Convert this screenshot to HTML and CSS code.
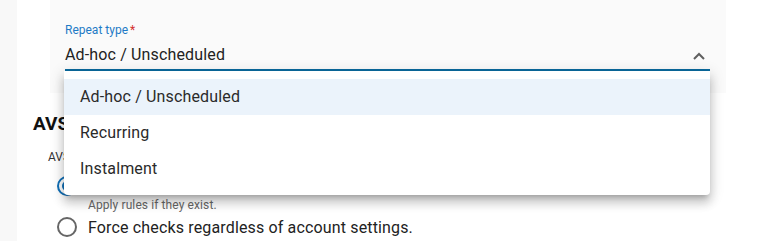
FILE: index.html
```html
<!DOCTYPE html>
<html>
<head>
<meta charset="utf-8">
<link rel="stylesheet" href="styles.css">
</head>
<body>
<div class="page">
  <div class="side"></div>
  <div class="main">
    <div class="field-box">
      <div class="field">
        <div class="label">Repeat type<span class="req">*</span></div>
        <div class="value-row">
          <span class="value">Ad-hoc / Unscheduled</span>
          <svg class="chev" width="14" height="10" viewBox="0 0 14 10"><path d="M2 8 L7 3 L12 8" fill="none" stroke="#5f5f5f" stroke-width="2"/></svg>
        </div>
        <div class="menu">
          <div class="item active">Ad-hoc / Unscheduled</div>
          <div class="item">Recurring</div>
          <div class="item">Instalment</div>
        </div>
      </div>
    </div>
    <div class="section">
      <h2 class="heading">AVS</h2>
      <div class="sub">AVS check</div>
      <div class="radios">
        <div class="radio-row">
          <span class="radio checked"></span>
          <span class="rtext">Use account settings.</span>
        </div>
        <div class="hint">Apply rules if they exist.</div>
        <div class="radio-row second">
          <span class="radio"></span>
          <span class="rtext">Force checks regardless of account settings.</span>
        </div>
      </div>
    </div>
  </div>
</div>
</body>
</html>
```

FILE: styles.css
```css
* { box-sizing: border-box; }
html, body { margin: 0; padding: 0; background: #fff; }
body { font-family: Roboto, "Noto Sans", Arial, sans-serif; color: #212121; overflow: hidden; }
.page { display: flex; width: 781px; height: 241px; }
.side { width: 17px; background: #f8f8f8; flex: none; }
.main { flex: 1; padding-left: 16px; }
.field-box { margin-left: 17px; width: 676px; height: 93px; background: #fafafa; padding: 23px 16px 0 15px; }
.field { position: relative; border-bottom: 2px solid #0a6a9e; height: 48px; }
.label { font-size: 12px; color: #1f7ac6; line-height: 14px; }
.req { color: #d32f2f; margin-left: 2px; }
.value-row { display: flex; align-items: center; justify-content: space-between; height: 32px; padding-top: 3px; }
.value { font-size: 16px; line-height: 20px; color: #222; letter-spacing: 0.15px; }
.chev { margin-right: 4px; margin-top: 2px; }
.menu { position: absolute; top: 48px; left: -1px; right: 0; background: #fff; padding: 8px 0; border-radius: 0 0 4px 4px;
  box-shadow: 0 5px 5px -3px rgba(0,0,0,.2), 0 8px 10px 1px rgba(0,0,0,.14), 0 3px 14px 2px rgba(0,0,0,.12); z-index: 5; }
.item { height: 36px; line-height: 36px; padding-left: 16px; font-size: 16px; color: #2a2a2a; letter-spacing: 0.15px; }
.item.active { background: #ebf3fb; }
.section { padding-top: 19px; }
.heading { margin: 0; font-size: 19px; font-weight: 700; line-height: 24px; color: #111; }
.sub { margin: 14px 0 0 15px; font-size: 12px; line-height: 14px; color: #333; }
.radios { padding-left: 24px; margin-top: 10px; }
.radio-row { display: flex; align-items: center; height: 24px; }
.radio-row.second { margin-top: 3px; }
.radio { width: 20px; height: 20px; border-radius: 50%; border: 2px solid #666; margin-right: 11px; flex: none; position: relative; }
.radio.checked { border-color: #1170b8; }
.radio.checked::after { content: ""; position: absolute; left: 3px; top: 3px; width: 10px; height: 10px; border-radius: 50%; background: #1170b8; }
.rtext { font-size: 16px; color: #222; letter-spacing: 0.15px; }
.hint { font-size: 12px; color: #666; padding-left: 31px; line-height: 14px; letter-spacing: 0.1px; }
```
